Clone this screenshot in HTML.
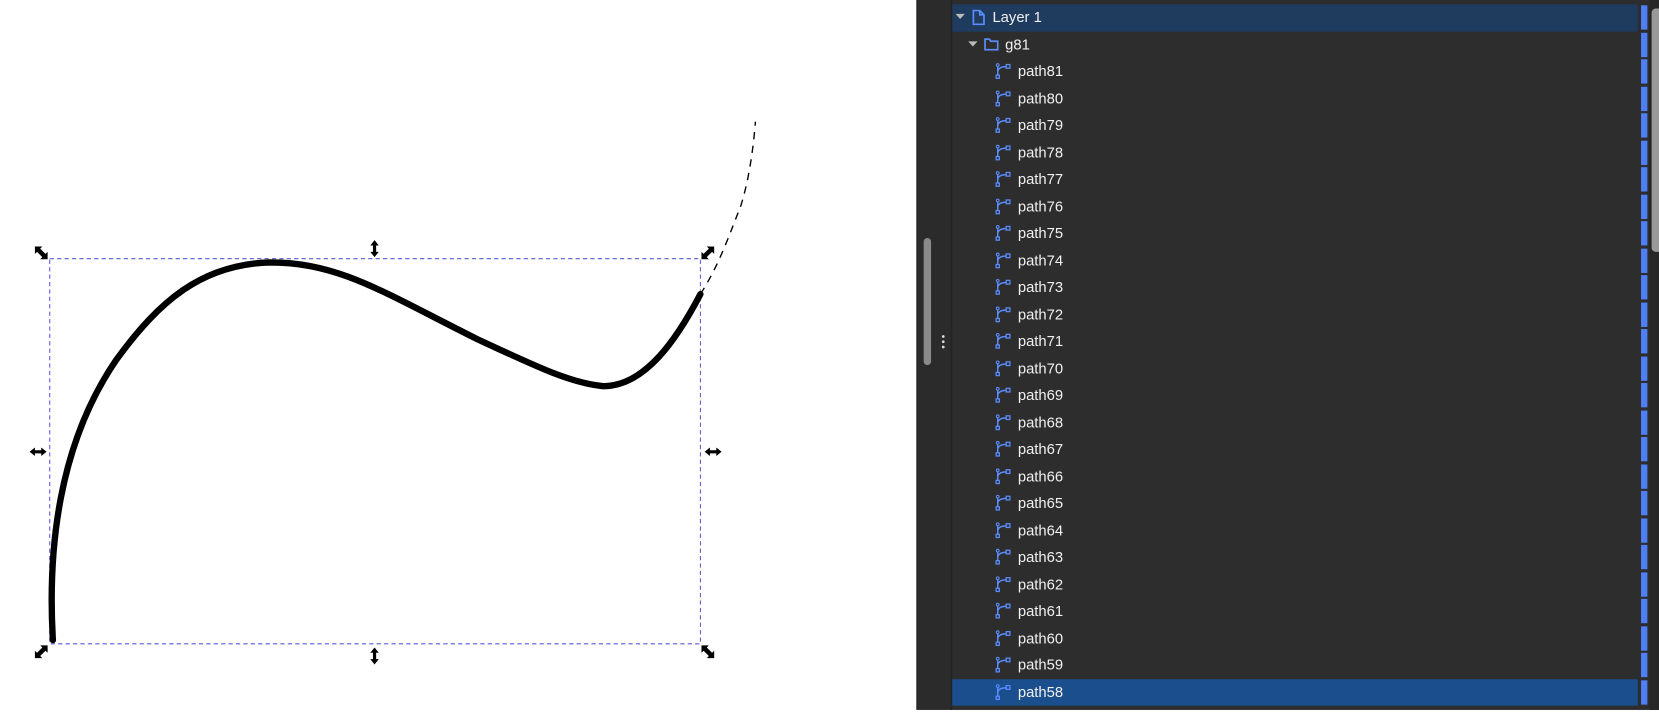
<!DOCTYPE html>
<html><head><meta charset="utf-8"><style>
html,body{margin:0;width:1659px;height:710px;overflow:hidden;background:#fff}
#wrap{position:absolute;left:0;top:0;width:1568px;height:671px;transform:scale(1.05804);transform-origin:0 0;font-family:"Segoe UI","Liberation Sans","DejaVu Sans",sans-serif}
#canvas{position:absolute;left:0;top:0;width:866px;height:671px;background:#fff}
#strip{position:absolute;left:866px;top:0;width:32px;height:671px;background:#2b2b2b}
#pill{position:absolute;left:873px;top:225px;width:7px;height:120px;background:#8a8a8a;border-radius:4px}
#dots{position:absolute;left:890px;top:316px;width:3px;height:14px}
#panel{position:absolute;left:898px;top:0;width:670px;height:671px;background:#2d2d2d;border-left:2px solid #232323}
.row{position:absolute;height:25.5px;color:#f0f0f0;font-size:14px;line-height:25px}
.row span{position:absolute}
.mk{position:absolute;left:1551px;width:6px;height:23px;background:#4f7ff5}
#sb{position:absolute;left:1561px;top:8px;width:7px;height:230px;background:#999;border-radius:4px 0 0 4px}
#sbt{position:absolute;left:1559px;top:0;width:9px;height:671px;background:#262626}
</style></head><body><div id="wrap">
<div id="canvas">
<svg width="866" height="671" viewBox="0 0 866 671">
<rect x="47" y="244.5" width="615" height="364" fill="none" stroke="#5a5adc" stroke-width="1" stroke-dasharray="4,3"/>
<path d="M50 605 C45 520,55 420,110 340 C150 285,190 250,255 248 C320 248,360 275,450 320 C510 348,540 362,570 365 C610 365,640 320,662 278" fill="none" stroke="#000" stroke-width="6" stroke-linecap="round"/>
<path d="M662 278 C680 250,690 220,700 195 C708 170,712 140,714 115" fill="none" stroke="#000" stroke-width="1.3" stroke-dasharray="7,6"/>
<g fill="#000">
<path d="M33 233 l7 0 -2 2 5 5 2-2 0 7 -7 0 2-2 -5-5 -2 2z"/>
<path d="M675 233 l-7 0 2 2 -5 5 -2-2 0 7 7 0 -2-2 5-5 2 2z"/>
<path d="M33 622 l7 0 -2-2 5-5 2 2 0-7 -7 0 2 2 -5 5 -2-2z"/>
<path d="M675 622 l-7 0 2-2 -5-5 -2 2 0-7 7 0 -2 2 5 5 2-2z"/>
<path d="M354 227 l4 5 -2.5 0 0 6 2.5 0 -4 5 -4-5 2.5 0 0-6 -2.5 0z"/>
<path d="M354 612 l4 5 -2.5 0 0 6 2.5 0 -4 5 -4-5 2.5 0 0-6 -2.5 0z"/>
<path d="M28 427 l5-4 0 2.5 6 0 0-2.5 5 4 -5 4 0-2.5 -6 0 0 2.5z"/>
<path d="M666 427 l5-4 0 2.5 6 0 0-2.5 5 4 -5 4 0-2.5 -6 0 0 2.5z"/>
</g></svg></div>
<div id="strip"></div><div id="pill"></div>
<svg id="dots" viewBox="0 0 3 14"><circle cx="1.5" cy="2" r="1.3" fill="#ddd"/><circle cx="1.5" cy="7" r="1.3" fill="#ddd"/><circle cx="1.5" cy="12" r="1.3" fill="#ddd"/></svg>
<div id="panel"></div>
<div class="row" style="left:900px;width:648px;top:4px;background:#1f3b5e">
<svg style="position:absolute;left:3px;top:9px" width="10" height="7"><path d="M0 0h9l-4.5 5z" fill="#bbb"/></svg>
<svg style="position:absolute;left:19px;top:5px" width="12" height="15"><path d="M1 1h6l4 4v9H1z M7 1v4h4" fill="none" stroke="#5b8cff" stroke-width="1.6"/></svg>
<span style="left:38px">Layer 1</span></div>
<div class="row" style="left:900px;width:648px;top:29.5px">
<svg style="position:absolute;left:15px;top:9px" width="10" height="7"><path d="M0 0h9l-4.5 5z" fill="#bbb"/></svg>
<svg style="position:absolute;left:30px;top:6px" width="14" height="12"><path d="M1 1h4l1.5 2H13v8H1z" fill="none" stroke="#5b8cff" stroke-width="1.6"/></svg>
<span style="left:50px">g81</span></div>
<div id="rows"></div>
<div id="sbt"></div><div id="sb"></div>
</div>
<script>
var h='';var n=81;
for(var i=0;i<24;i++){var t=55+i*25.5;var sel=(n==58);
h+='<div class="row" style="left:900px;width:648px;top:'+t+'px;'+(sel?'background:#1a4e8c':'')+'"><svg style="position:absolute;left:40px;top:4px" width="16" height="17"><rect x="1.5" y="12" width="3" height="3" fill="none" stroke="#5b8cff" stroke-width="1.2"/><rect x="11" y="2" width="3.5" height="3.5" fill="none" stroke="#5b8cff" stroke-width="1.2"/><path d="M3 4 V12 M3 9 C3 6,6 4,11 4" fill="none" stroke="#5b8cff" stroke-width="1.4"/><circle cx="3" cy="2.5" r="1.3" fill="none" stroke="#5b8cff" stroke-width="1"/></svg><span style="left:62px">path'+n+'</span></div>';n--;}
for(var j=0;j<26;j++){h+='<div class="mk" style="top:'+(5+j*25.5)+'px"></div>';}
document.getElementById('rows').innerHTML=h;
</script>
</body></html>
